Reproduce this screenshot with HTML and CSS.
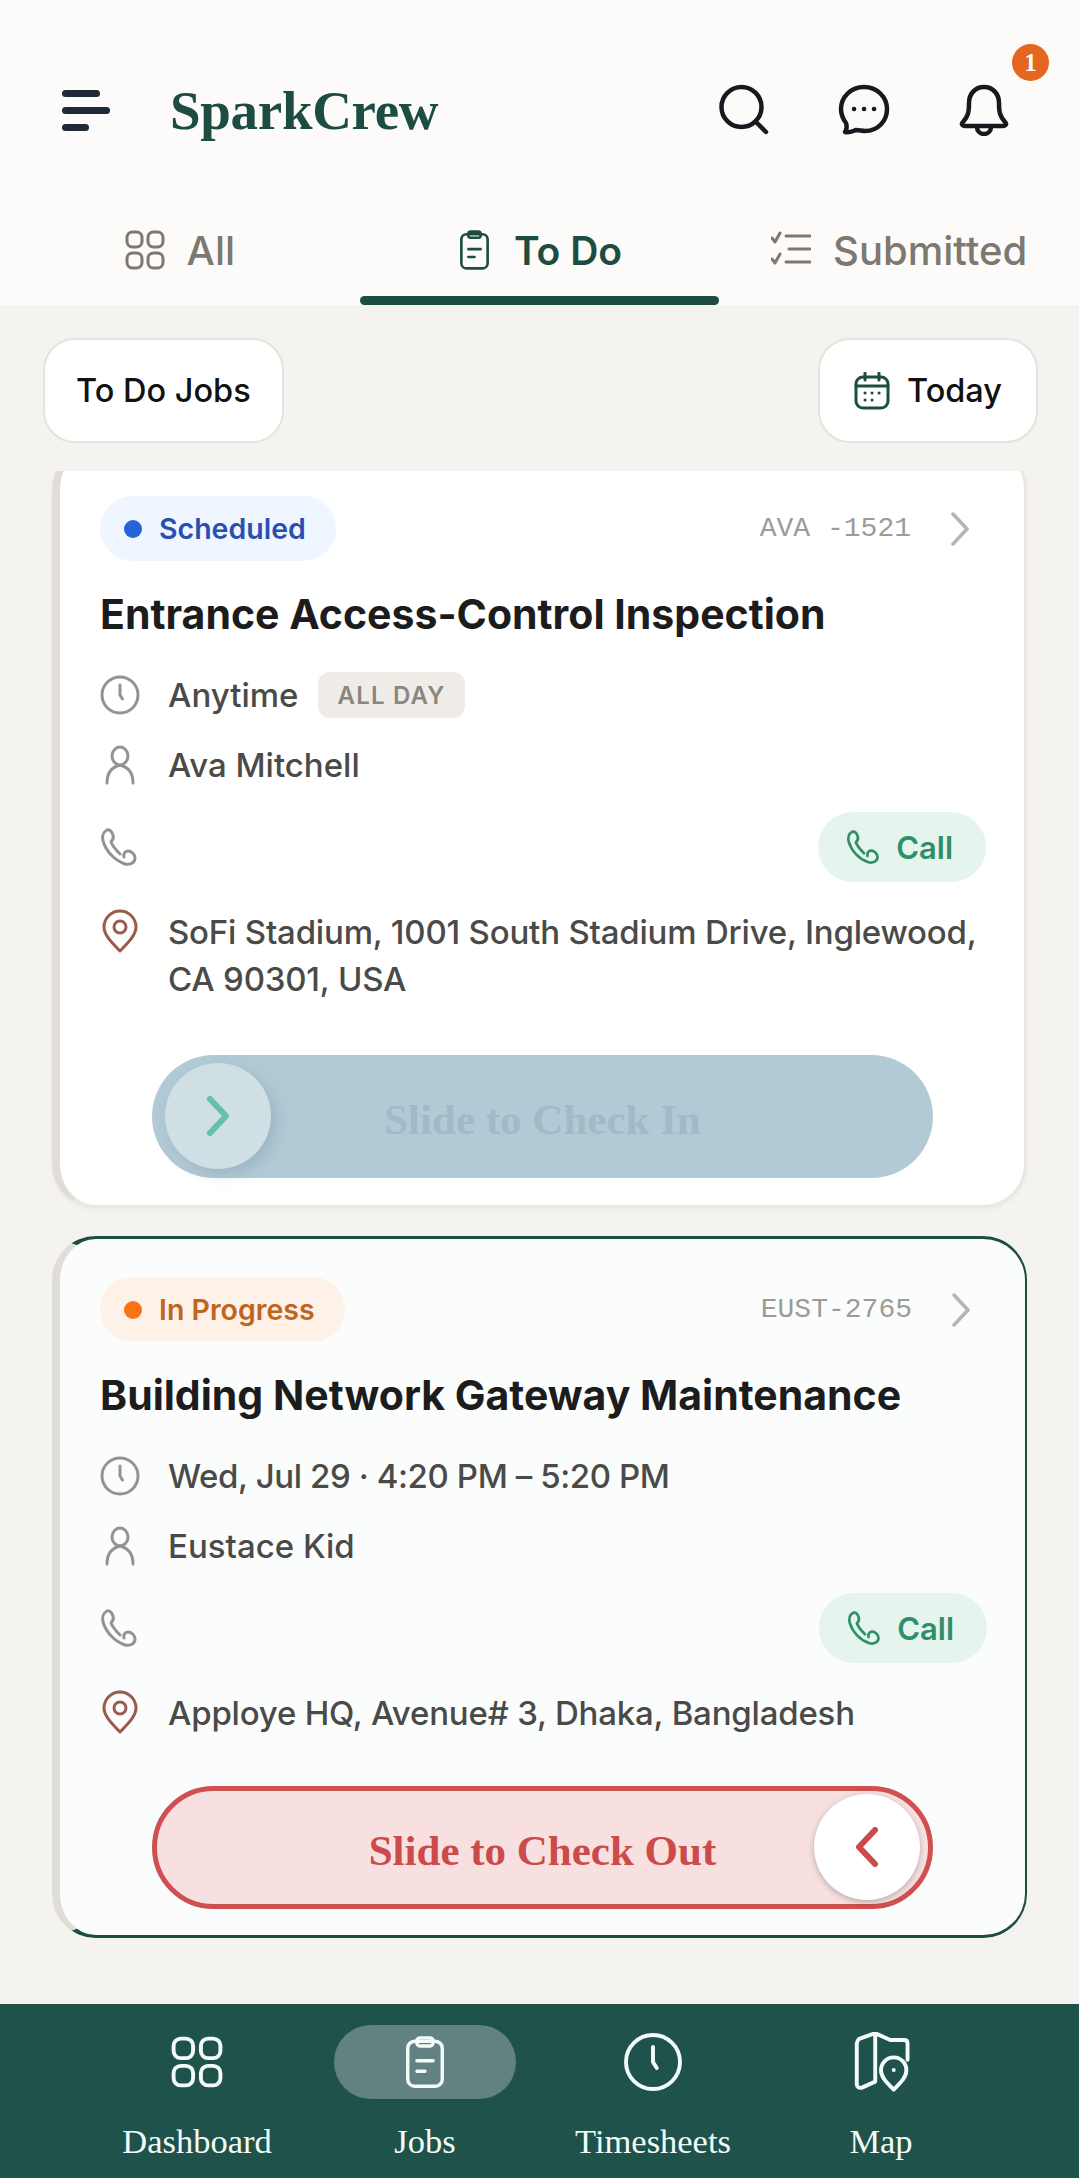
FILE: index.html
```html
<!DOCTYPE html>
<html lang="en">
<head>
    <meta charset="UTF-8">
    <meta name="viewport" content="width=device-width, initial-scale=1.0">
    <title>SparkCrew</title>
    <link rel="stylesheet" href="styles.css">
</head>
<body>
    <svg class="sprites" width="0" height="0">
        <symbol id="i-grid" viewBox="0 0 40 40"><rect x="2" y="2" width="15" height="15" rx="5.500"/><rect x="23" y="2" width="15" height="15" rx="5.500"/><rect x="2" y="23" width="15" height="15" rx="5.500"/><rect x="23" y="23" width="15" height="15" rx="5.500"/></symbol>
        <symbol id="i-clip" viewBox="0 0 40 46"><rect x="5" y="5" width="30" height="39" rx="6"/><rect x="13" y="2" width="14" height="7" rx="2.500"/><path d="M13 22h14M13 31h7"/></symbol>
        <symbol id="i-clock" viewBox="0 0 40 40"><circle cx="20" cy="20" r="18"/><path d="M20 10v10l2.500 4"/></symbol>
        <symbol id="i-user" viewBox="0 0 40 40"><ellipse cx="20" cy="11" rx="8" ry="9"/><path d="M7 38c0-10 5-16 13-18 8 2 13 8 13 18"/></symbol>
        <symbol id="i-phone" viewBox="0 0 40 40"><path d="M7 3C3 5 2 10 3 14c3 10 11 19 22 23 5 1 10-1 10-6 0-4-4-7-7-7-3 0-5 3-4 6M7 3c3-1 5 2 6 5 1 3 0 5-2 7 2 5 5 8 9 12"/></symbol>
        <symbol id="i-pin" viewBox="0 0 40 44"><path d="M20 42C10 32 4 25 4 18a16 16 0 0 1 32 0c0 7-6 14-16 24z"/><circle cx="20" cy="18" r="6"/></symbol>
    </svg>

    <div class="app">
        <header class="topbar">
            <div class="menu-icon"><span class="m1"></span><span class="m2"></span><span class="m3"></span></div>
            <div class="logo">SparkCrew</div>
            <div class="top-icons">
                <svg class="top-icon" viewBox="0 0 52 52"><circle cx="23.500" cy="23" r="20"/><path d="M38 38l10 10"/></svg>
                <svg class="top-icon" viewBox="0 0 52 52"><path d="M26 3c13 0 23 10 23 22s-9 22-22 22c-3 0-6-1-9-1-3 1-6 3-11 2 2-3 2-6 1-9-3-4-5-9-5-14C3 13 13 3 26 3z"/><path class="dots" d="M16 25h.1M26 25h.1M36 25h.1"/></svg>
                <div class="bell">
                    <svg class="top-icon" viewBox="0 0 52 52"><path d="M26 3c-9 0-15 7-15 16 0 10-1 13-6 19-2 2-1 4 2 4h38c3 0 4-2 2-4-5-6-6-9-6-19 0-9-6-16-15-16z"/><path d="M19 43c0 4 3 7 7 7s7-3 7-7"/></svg>
                    <span class="badge">1</span>
                </div>
            </div>
        </header>

        <nav class="tabs">
            <div class="tab">
                <div class="tab-label"><svg class="tab-icon"><use href="#i-grid"/></svg>All</div>
            </div>
            <div class="tab tab-active">
                <div class="tab-label"><svg class="tab-icon tab-icon-clip"><use href="#i-clip"/></svg>To Do</div>
                <div class="tab-line"></div>
            </div>
            <div class="tab">
                <div class="tab-label">
                    <svg class="tab-icon" viewBox="0 0 40 40"><path d="M1 8l3 4 5-9M1 29l3 4 5-9"/><path d="M15 6h24M18 19h21M15 32h24"/></svg>Submitted
                </div>
            </div>
        </nav>

        <div class="filters">
            <div class="chip">To Do Jobs</div>
            <div class="chip chip-date">
                <svg class="cal-icon" viewBox="0 0 36 38"><rect x="2" y="5" width="32" height="31" rx="7"/><path d="M2 14h32M11 1v7M25 1v7"/><path class="dots" d="M11 21h.1M18 21h.1M25 21h.1M11 28h.1M18 28h.1"/></svg>
                Today
            </div>
        </div>

        <main class="job-list">
            <article class="job-card job-first">
                <div class="job-top">
                    <span class="status status-blue"><i class="dot"></i>Scheduled</span>
                    <span class="job-id">AVA -1521</span>
                    <svg class="chevron" viewBox="0 0 20 34"><path d="M3 2l14 15L3 32"/></svg>
                </div>
                <h2 class="job-title">Entrance Access-Control Inspection</h2>
                <div class="row row-time">
                    <svg class="row-icon"><use href="#i-clock"/></svg>
                    <span>Anytime</span><span class="tag">ALL DAY</span>
                </div>
                <div class="row row-name">
                    <svg class="row-icon"><use href="#i-user"/></svg>
                    <span class="name">Ava Mitchell</span>
                </div>
                <div class="row row-phone">
                    <svg class="row-icon"><use href="#i-phone"/></svg>
                    <a class="call"><svg class="call-icon"><use href="#i-phone"/></svg>Call</a>
                </div>
                <div class="row row-addr">
                    <svg class="row-icon pin"><use href="#i-pin"/></svg>
                    <span class="addr">SoFi Stadium, 1001 South Stadium Drive, Inglewood, CA 90301, USA</span>
                </div>
                <div class="slider slider-in">
                    <span class="knob"><svg viewBox="0 0 24 40"><path d="M4 3l16 17L4 37"/></svg></span>
                    Slide to Check In
                </div>
            </article>

            <article class="job-card job-active">
                <div class="job-top">
                    <span class="status status-orange"><i class="dot"></i>In Progress</span>
                    <span class="job-id">EUST-2765</span>
                    <svg class="chevron" viewBox="0 0 20 34"><path d="M3 2l14 15L3 32"/></svg>
                </div>
                <h2 class="job-title">Building Network Gateway Maintenance</h2>
                <div class="row row-time">
                    <svg class="row-icon"><use href="#i-clock"/></svg>
                    <span class="when">Wed, Jul 29 · 4:20 PM – 5:20 PM</span>
                </div>
                <div class="row row-name">
                    <svg class="row-icon"><use href="#i-user"/></svg>
                    <span class="name">Eustace Kid</span>
                </div>
                <div class="row row-phone">
                    <svg class="row-icon"><use href="#i-phone"/></svg>
                    <a class="call"><svg class="call-icon"><use href="#i-phone"/></svg>Call</a>
                </div>
                <div class="row row-addr">
                    <svg class="row-icon pin"><use href="#i-pin"/></svg>
                    <span class="addr">Apploye HQ, Avenue# 3, Dhaka, Bangladesh</span>
                </div>
                <div class="slider slider-out">
                    Slide to Check Out
                    <span class="knob"><svg viewBox="0 0 24 40"><path d="M20 3L4 20l16 17"/></svg></span>
                </div>
            </article>
        </main>

        <footer class="bottom-nav">
            <div class="nav-item">
                <div class="nav-icon"><svg class="nav-svg"><use href="#i-grid"/></svg></div>
                <span>Dashboard</span>
            </div>
            <div class="nav-item nav-active">
                <div class="nav-icon"><svg class="nav-svg nav-clip"><use href="#i-clip"/></svg></div>
                <span>Jobs</span>
            </div>
            <div class="nav-item">
                <div class="nav-icon"><svg class="nav-svg nav-clock"><use href="#i-clock"/></svg></div>
                <span>Timesheets</span>
            </div>
            <div class="nav-item">
                <div class="nav-icon">
                    <svg class="nav-svg nav-map" viewBox="0 0 50 52"><path d="M20 43l-11 5c-3 1-5 0-5-3V10c0-2 1-3 2-4l14-5 0 42zM20 1l13 6 12 0c2 0 3 1 3 3v14"/><path d="M36 50c-7-7-11-11-11-17a11 11 0 0 1 22 0c0 6-4 10-11 17z"/><path d="M36 33h.1"/></svg>
                </div>
                <span>Map</span>
            </div>
        </footer>
    </div>
</body>
</html>
```

FILE: styles.css
```css
* {
    box-sizing: border-box;
}
body {
    margin: 0;
    font-family: Inter, "Noto Sans", sans-serif;
    background: #f4f3ef;
    color: #222;
}
.sprites {
    display: block;
}
.app {
    width: 1079px;
    height: 2178px;
    display: flex;
    flex-direction: column;
    overflow: hidden;
}
svg {
    fill: none;
    stroke: currentColor;
    stroke-linecap: round;
    stroke-linejoin: round;
    display: block;
}

/* top bar */
.topbar {
    height: 206px;
    padding: 14px 66px 0 62px;
    display: flex;
    align-items: center;
    background: #fcfbf9;
}
.menu-icon {
    width: 48px;
    display: flex;
    flex-direction: column;
    gap: 10px;
}
.menu-icon span {
    display: block;
    height: 7px;
    background: #1f2937;
    border-radius: 4px;
}
.m1 { width: 38px; }
.m2 { width: 48px; }
.m3 { width: 27px; }
.logo {
    margin-left: 60px;
    font-family: "Liberation Serif", serif;
    font-weight: 700;
    font-size: 55px;
    color: #1d4d42;
    letter-spacing: -0.3px;
}
.top-icons {
    margin-left: auto;
    display: flex;
    align-items: center;
    gap: 68px;
}
.top-icon {
    width: 52px;
    height: 52px;
    stroke: #17191f;
    stroke-width: 4.5;
}
.bell {
    position: relative;
    margin-right: 3px;
}
.badge {
    position: absolute;
    top: -40px;
    right: -39px;
    width: 37px;
    height: 37px;
    border-radius: 50%;
    background: #e5661f;
    color: #fff;
    font-family: "Liberation Serif", serif;
    font-weight: 700;
    font-size: 25px;
    display: flex;
    align-items: center;
    justify-content: center;
}

/* tabs */
.tabs {
    height: 99px;
    display: grid;
    grid-template-columns: repeat(3, 1fr);
    background: #fcfbf9;
}
.tab {
    display: flex;
    flex-direction: column;
    align-items: center;
    font-size: 40px;
    font-weight: 500;
    color: #7d7870;
}
.tab-label {
    height: 88px;
    margin-bottom: 2px;
    display: flex;
    align-items: center;
    gap: 22px;
}
.tab-icon {
    width: 40px;
    height: 40px;
    stroke-width: 3;
}
.tab-active {
    color: #1d4d42;
    font-weight: 600;
    font-size: 39px;
}
.tab-icon-clip {
    width: 35px;
    height: 44px;
    stroke-width: 3;
}
.tab-line {
    width: 100%;
    height: 9px;
    background: #1d4d42;
    border-radius: 5px;
}

/* filters */
.filters {
    display: flex;
    justify-content: space-between;
    padding: 33px 41px 28px 43px;
}
.chip {
    height: 105px;
    padding: 0 31px;
    display: flex;
    align-items: center;
    gap: 17px;
    background: #fff;
    border: 2px solid #e6e3dc;
    border-radius: 32px;
    font-size: 32.5px;
    font-weight: 500;
    color: #111;
}
.chip-date {
    padding: 0 34px;
}
.cal-icon {
    width: 36px;
    height: 38px;
    color: #1d4d42;
    stroke-width: 3;
}

/* job cards */
.job-list {
    flex: 1;
    overflow: hidden;
    padding: 0 52px;
}
.job-card {
    position: relative;
    background: #fff;
    border: 2px solid #ebe8e1;
    border-left: 8px solid #e0ddd6;
    border-radius: 44px;
    padding: 0 38px 0 40px;
    margin-bottom: 28px;
}
.job-first {
    margin-top: -26px;
    height: 763px;
    padding-top: 49px;
    border-right-width: 3px;
    border-bottom-width: 3px;
    box-shadow: 0 2px 4px rgba(0, 0, 0, 0.04);
}
.job-active {
    height: 702px;
    padding-top: 38px;
    background: #fbfdfc;
    border-top: 3px solid #1d4d42;
    border-right: 2px solid #1d4d42;
    border-bottom: 3px solid #1d4d42;
}
.job-top {
    display: flex;
    align-items: center;
    height: 65px;
}
.status {
    height: 65px;
    padding: 0 30px 0 24px;
    border-radius: 33px;
    display: flex;
    align-items: center;
    gap: 17px;
    font-size: 28.5px;
    font-weight: 600;
}
.dot {
    width: 18px;
    height: 18px;
    border-radius: 50%;
    background: currentColor;
}
.status-blue {
    background: #eff6ff;
    color: #2a4fb0;
}
.status-blue .dot {
    background: #2563d8;
}
.status-orange {
    background: #fef1e8;
    color: #c0651e;
}
.status-orange .dot {
    background: #f97316;
}
.job-id {
    margin-left: auto;
    font-family: "Liberation Mono", monospace;
    font-size: 28px;
    color: #9b9b98;
}
.chevron {
    width: 20px;
    height: 34px;
    margin: 0 16px 0 39px;
    stroke: #b5b5b2;
    stroke-width: 3.5;
}
.job-title {
    margin: 32px 0 0;
    height: 42px;
    font-size: 41px;
    line-height: 42px;
    font-weight: 700;
    color: #1c1c1c;
}
.row {
    display: flex;
    align-items: center;
    font-size: 33px;
    font-weight: 450;
    color: #4a4a48;
}
.row-time {
    margin-top: 37px;
    height: 46px;
}
.when {
    letter-spacing: -0.4px;
}
.row-name {
    margin-top: 24px;
    height: 46px;
}
.name {
    font-weight: 500;
}
.row-phone {
    margin-top: 23px;
    height: 72px;
}
.row-addr {
    margin-top: 26px;
    align-items: flex-start;
    line-height: 47px;
}
.addr {
    letter-spacing: -0.2px;
}
.row-icon {
    width: 40px;
    height: 40px;
    margin-right: 28px;
    flex-shrink: 0;
    color: #939391;
    stroke-width: 3;
}
.pin {
    height: 44px;
    color: #9c5a4c;
}
.tag {
    margin-left: 20px;
    height: 46px;
    padding: 0 19px;
    display: flex;
    align-items: center;
    background: #f0ede8;
    border-radius: 12px;
    font-size: 24px;
    font-weight: 600;
    letter-spacing: 1.2px;
    color: #8a8680;
}
.call {
    margin-left: auto;
    height: 70px;
    padding: 0 33px 0 28px;
    display: flex;
    align-items: center;
    gap: 14px;
    background: #e5f4ec;
    border-radius: 35px;
    font-size: 31px;
    font-weight: 600;
    color: #2f8f6b;
}
.call-icon {
    width: 36px;
    height: 36px;
    stroke-width: 3;
}

/* slide buttons */
.slider {
    position: relative;
    margin-left: 52px;
    width: 781px;
    height: 123px;
    padding-top: 5px;
    border-radius: 62px;
    display: flex;
    align-items: center;
    justify-content: center;
    font-family: "Liberation Serif", serif;
    font-weight: 700;
    font-size: 43px;
}
.slider-in {
    margin-top: 52px;
    background: #b2cad5;
    color: #a2b9c8;
}
.slider-out {
    margin-top: 49px;
    background: #f8e0e0;
    border: 5px solid #cf5050;
    color: #cb4a4a;
}
.knob {
    position: absolute;
    top: 8px;
    width: 106px;
    height: 106px;
    border-radius: 50%;
    display: flex;
    align-items: center;
    justify-content: center;
}
.knob svg {
    width: 24px;
    height: 40px;
    stroke-width: 6;
}
.slider-in .knob {
    left: 13px;
    background: #cfdfe3;
    color: #62c3a6;
    box-shadow: 6px 6px 14px rgba(90, 130, 150, 0.25);
}
.slider-out .knob {
    top: 3px;
    right: 8px;
    background: #fff;
    color: #cb4a4a;
    box-shadow: 0 2px 6px rgba(0, 0, 0, 0.25);
}

/* bottom nav */
.bottom-nav {
    height: 174px;
    background: #1f524a;
    padding: 21px 84px 0 83px;
    display: grid;
    grid-template-columns: repeat(4, 1fr);
    color: #f3fbf8;
}
.nav-item {
    display: flex;
    flex-direction: column;
    align-items: center;
    font-family: "Liberation Serif", serif;
    font-size: 34.5px;
}
.nav-icon {
    width: 182px;
    height: 74px;
    border-radius: 37px;
    display: flex;
    align-items: center;
    justify-content: center;
    margin-bottom: 23px;
}
.nav-active .nav-icon {
    background: #618280;
}
.nav-svg {
    width: 52px;
    height: 52px;
    stroke-width: 3;
}
.nav-clip {
    width: 46px;
    height: 56px;
}
.nav-clock {
    width: 60px;
    height: 60px;
    stroke-width: 2.6;
    flex-shrink: 0;
}
.nav-map {
    width: 58px;
    height: 60px;
    flex-shrink: 0;
    stroke-width: 3.4;
}
```
